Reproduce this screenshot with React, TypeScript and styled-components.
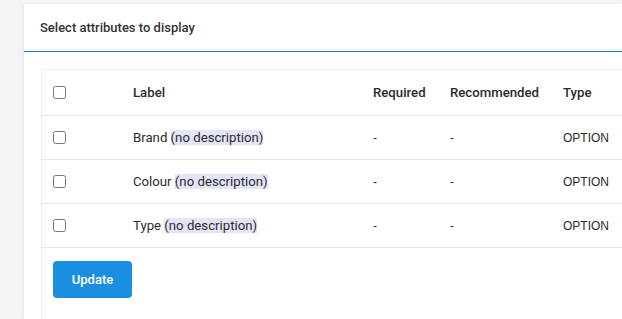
import React from "react";
import styled, { createGlobalStyle } from "styled-components";

const GlobalStyle = createGlobalStyle`
  html, body {
    margin: 0;
    padding: 0;
    background: #f3f4f4;
    font-family: Roboto, "Liberation Sans", sans-serif;
    color: #2b2b2b;
    overflow: hidden;
  }
`;

const Page = styled.div`
  padding: 4px 0 0 24px;
  height: 319px;
  box-sizing: border-box;
`;

const Card = styled.div`
  background: #fff;
  width: 598px;
  height: 100%;
  box-shadow: -1px 0 2px rgba(0, 0, 0, 0.06);
`;

const CardHeader = styled.div`
  height: 47px;
  display: flex;
  align-items: center;
  padding: 0 16px;
  font-size: 13px;
  font-weight: 500;
  color: #333;
  border-bottom: 1px solid #1f82cf;
`;

const CardBody = styled.div`
  padding: 17px 0 0 17px;
`;

const Panel = styled.div`
  border: 1px solid #efefef;
  border-right: none;
  border-radius: 3px 0 0 3px;
  height: 260px;
`;

const Row = styled.div<{ $head?: boolean }>`
  display: grid;
  grid-template-columns: 91px 240px 77px 113px 1fr;
  align-items: center;
  height: ${(p) => (p.$head ? 45 : 43)}px;
  border-bottom: 1px solid #e8e8e8;
  font-size: 13.2px;
  font-weight: ${(p) => (p.$head ? 500 : 400)};
  color: #2b2b2b;
`;

const CheckCell = styled.div`
  padding-left: 11px;
  display: flex;
  align-items: center;
`;

const Check = styled.input`
  margin: 0;
  width: 13px;
  height: 13px;
`;

const Plain = styled.span`
  font-family: "Liberation Sans", Arial, sans-serif;
  font-size: 12px;
`;

const Hint = styled.span`
  background: #e4e4f9;
`;

const Footer = styled.div`
  padding: 13px 11px;
`;

const Button = styled.button`
  width: 79px;
  height: 37px;
  border: none;
  border-radius: 4px;
  background: #1a8fe2;
  color: #fff;
  font-family: Roboto, sans-serif;
  font-size: 13px;
  font-weight: 500;
  cursor: pointer;
`;

const rows = ["Brand", "Colour", "Type"];

export default function App() {
  return (
    <>
      <GlobalStyle />
      <Page>
        <Card>
          <CardHeader>Select attributes to display</CardHeader>
          <CardBody>
            <Panel>
              <Row $head>
                <CheckCell>
                  <Check type="checkbox" />
                </CheckCell>
                <div>Label</div>
                <div>Required</div>
                <div>Recommended</div>
                <div>Type</div>
              </Row>
              {rows.map((name) => (
                <Row key={name}>
                  <CheckCell>
                    <Check type="checkbox" />
                  </CheckCell>
                  <div>
                    {name} <Hint>(no description)</Hint>
                  </div>
                  <Plain>-</Plain>
                  <Plain>-</Plain>
                  <Plain>OPTION</Plain>
                </Row>
              ))}
              <Footer>
                <Button>Update</Button>
              </Footer>
            </Panel>
          </CardBody>
        </Card>
      </Page>
    </>
  );
}
